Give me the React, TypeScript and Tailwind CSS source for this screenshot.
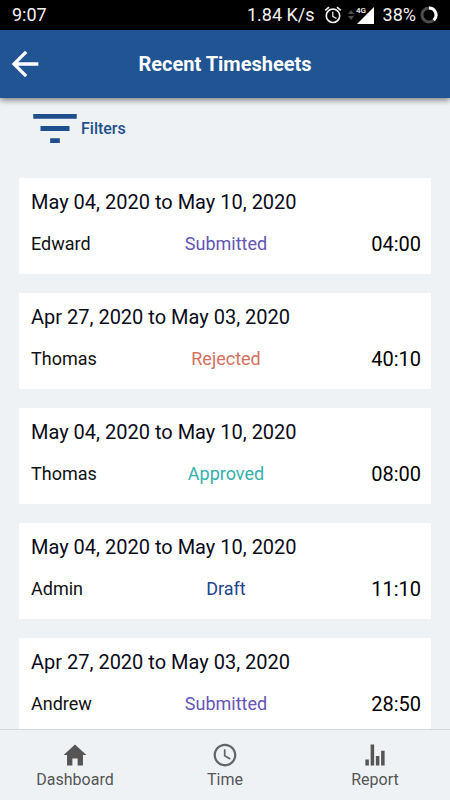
import { useState } from "react";
import { IoMdHome, IoMdStats, IoMdTime } from "react-icons/io";
import { MdAlarm, MdArrowBack } from "react-icons/md";

const STATUS_STYLES = {
    Submitted: "text-[#6555b5]",
    Rejected: "text-[#d4705f]",
    Approved: "text-[#35b0ab]",
    Draft: "text-[#1d448c]",
} as const;

type Timesheet = {
    id: number;
    period: string;
    employee: string;
    status: keyof typeof STATUS_STYLES;
    hours: string;
};

const TIMESHEETS: Timesheet[] = [
    { id: 1, period: "May 04, 2020 to May 10, 2020", employee: "Edward", status: "Submitted", hours: "04:00" },
    { id: 2, period: "Apr 27, 2020 to May 03, 2020", employee: "Thomas", status: "Rejected", hours: "40:10" },
    { id: 3, period: "May 04, 2020 to May 10, 2020", employee: "Thomas", status: "Approved", hours: "08:00" },
    { id: 4, period: "May 04, 2020 to May 10, 2020", employee: "Admin", status: "Draft", hours: "11:10" },
    { id: 5, period: "Apr 27, 2020 to May 03, 2020", employee: "Andrew", status: "Submitted", hours: "28:50" },
];

const TABS = [
    { label: "Dashboard", icon: IoMdHome },
    { label: "Time", icon: IoMdTime },
    { label: "Report", icon: IoMdStats },
];

function StatusBar() {
    return (
        <div className="flex h-[30px] shrink-0 items-center justify-between bg-black px-3 text-lg text-[#f2f2f2]">
            <span>9:07</span>
            <div className="flex items-center">
                <span>1.84 K/s</span>
                <MdAlarm className="ml-2 size-5" aria-hidden="true" />
                <svg className="ml-1 h-[18px] w-7" viewBox="0 0 28 18" aria-hidden="true">
                    <path d="M1 8l3-4 3 4zM1 10l3 4 3-4z" fill="#4d4d4d" />
                    <path d="M27 1v17H10z" fill="#fff" />
                    <text x="9" y="7" fontSize="8" fontWeight="500" fill="#fff">4G</text>
                </svg>
                <span className="ml-2">38%</span>
                <svg className="ml-1 size-[18px]" viewBox="0 0 18 18" fill="none" strokeWidth="3" aria-hidden="true">
                    <circle cx="9" cy="9" r="7" stroke="#4d4d4d" />
                    <path d="M9 2a7 7 0 0 1 4.800 12.100" stroke="#fff" />
                </svg>
            </div>
        </div>
    );
}

function TimesheetCard({ sheet }: { sheet: Timesheet }) {
    return (
        <li className="bg-white pt-2 pr-[10px] pb-4 pl-3">
            <h2 className="text-xl leading-8 text-[#0b0b1a]">{sheet.period}</h2>
            <div className="mt-3 grid grid-cols-3 items-center">
                <span className="text-lg leading-7 text-[#111]">{sheet.employee}</span>
                <span className={`text-center text-lg leading-7 ${STATUS_STYLES[sheet.status]}`}>{sheet.status}</span>
                <span className="text-right text-xl leading-7 text-black">{sheet.hours}</span>
            </div>
        </li>
    );
}

export default function App() {
    const [activeTab, setActiveTab] = useState("Time");

    return (
        <div className="flex h-dvh flex-col overflow-hidden bg-[#eef2f5] font-[Roboto,sans-serif]">
            <StatusBar />

            <header className="z-10 grid h-[68px] shrink-0 grid-cols-[50px_1fr_50px] items-center bg-[#205493] text-white shadow-[0_2px_6px_rgba(0,0,0,0.5)]">
                <button type="button" aria-label="Back" className="flex justify-center">
                    <MdArrowBack className="size-10" />
                </button>
                <h1 className="text-center text-xl font-bold">Recent Timesheets</h1>
            </header>

            <main className="min-h-0 flex-1 overflow-y-auto px-[19px] pb-5 [scrollbar-width:none]">
                <button type="button" className="mt-4 ml-[14px] flex items-center gap-1 text-[#1f4f8c]">
                    <svg className="h-[29px] w-11" viewBox="3 6 18 12" fill="currentColor" aria-hidden="true">
                        <path d="M10 18h4v-2h-4v2zM3 6v2h18V6H3zm3 7h12v-2H6v2z" />
                    </svg>
                    <span className="text-base font-medium">Filters</span>
                </button>

                <ul className="mt-[35px] flex flex-col gap-[19px]">
                    {TIMESHEETS.map((sheet) => <TimesheetCard key={sheet.id} sheet={sheet} />)}
                </ul>
            </main>

            <nav className="grid h-[71px] shrink-0 grid-cols-3 border-t border-[#d3d8dc] bg-[#eef2f5]">
                {TABS.map(({ label, icon: Icon }) => (
                    <button
                        key={label}
                        type="button"
                        aria-current={activeTab === label ? "page" : undefined}
                        onClick={() => setActiveTab(label)}
                        className="flex flex-col items-center gap-px pt-[11px] text-[#555]"
                    >
                        <Icon className="size-7" aria-hidden="true" />
                        <span className="text-base leading-5">{label}</span>
                    </button>
                ))}
            </nav>
        </div>
    );
}
